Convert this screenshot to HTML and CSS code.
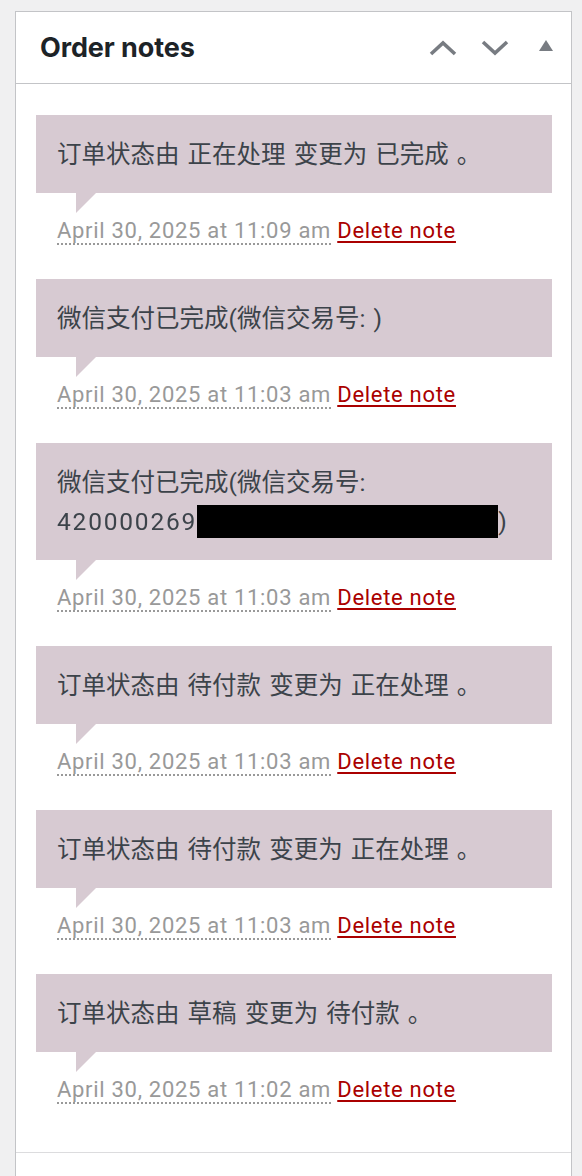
FILE: index.html
```html
<!DOCTYPE html>
<html lang="zh-CN">
<head>
	<meta charset="UTF-8">
	<title>Order notes</title>
	<link rel="stylesheet" href="styles.css">
</head>
<body>
	<div id="woocommerce-order-notes" class="postbox">
		<div class="postbox-header">
			<h2 class="hndle">Order notes</h2>
			<div class="handle-actions">
				<button type="button" class="handle-order-higher" aria-label="Move up">
					<svg width="28" height="16" viewBox="0 0 28 16"><path d="M2 14 L14 3 L26 14" fill="none" stroke="#787c82" stroke-width="3.6"/></svg>
				</button>
				<button type="button" class="handle-order-lower" aria-label="Move down">
					<svg width="28" height="16" viewBox="0 0 28 16"><path d="M2 2 L14 13 L26 2" fill="none" stroke="#787c82" stroke-width="3.6"/></svg>
				</button>
				<button type="button" class="handlediv" aria-label="Toggle panel">
					<svg width="14" height="11" viewBox="0 0 14 11"><path d="M7 0 L14 11 L0 11 Z" fill="#787c82"/></svg>
				</button>
			</div>
		</div>
		<div class="inside">
			<ul class="order_notes">
				<li class="note system-note">
					<div class="note_content"><p>订单状态由 正在处理 变更为 已完成 。</p></div>
					<p class="meta"><abbr class="exact-date" title="2025-04-30 11:09:00">April 30, 2025 at 11:09 am</abbr> <a href="#" class="delete_note">Delete note</a></p>
				</li>
				<li class="note system-note">
					<div class="note_content"><p>微信支付已完成(微信交易号: )</p></div>
					<p class="meta"><abbr class="exact-date" title="2025-04-30 11:03:00">April 30, 2025 at 11:03 am</abbr> <a href="#" class="delete_note">Delete note</a></p>
				</li>
				<li class="note system-note">
					<div class="note_content"><p>微信支付已完成(微信交易号:<br><span class="blurred">420000269</span><span class="redacted"></span>)</p></div>
					<p class="meta"><abbr class="exact-date" title="2025-04-30 11:03:00">April 30, 2025 at 11:03 am</abbr> <a href="#" class="delete_note">Delete note</a></p>
				</li>
				<li class="note system-note">
					<div class="note_content"><p>订单状态由 待付款 变更为 正在处理 。</p></div>
					<p class="meta"><abbr class="exact-date" title="2025-04-30 11:03:00">April 30, 2025 at 11:03 am</abbr> <a href="#" class="delete_note">Delete note</a></p>
				</li>
				<li class="note system-note">
					<div class="note_content"><p>订单状态由 待付款 变更为 正在处理 。</p></div>
					<p class="meta"><abbr class="exact-date" title="2025-04-30 11:03:00">April 30, 2025 at 11:03 am</abbr> <a href="#" class="delete_note">Delete note</a></p>
				</li>
				<li class="note system-note">
					<div class="note_content"><p>订单状态由 草稿 变更为 待付款 。</p></div>
					<p class="meta"><abbr class="exact-date" title="2025-04-30 11:02:00">April 30, 2025 at 11:02 am</abbr> <a href="#" class="delete_note">Delete note</a></p>
				</li>
			</ul>
		</div>
		<div class="add_note"></div>
	</div>
</body>
</html>
```

FILE: styles.css
```css
* {
	margin:0;
	padding:0;
	box-sizing:border-box;
}
html,body {
	height:100%;
	overflow:hidden;
}
body {
	background:#f0f0f1;
	font-family:Roboto, "Noto Sans CJK SC", sans-serif;
	color:#3c434a;
}
ul {
	list-style:none;
}
.postbox {
	margin:11px 0 0 15px;
	width:557px;
	background:#fff;
	border:1px solid #c3c4c7;
	border-bottom:none;
}
.postbox-header {
	display:flex;
	align-items:center;
	justify-content:space-between;
	height:72px;
	padding:0 0 0 24px;
	border-bottom:1px solid #c3c4c7;
}
.hndle {
	font-family:Inter, "Noto Sans CJK SC", sans-serif;
	font-size:27px;
	font-weight:700;
	color:#1d2327;
	letter-spacing:-0.1px;
	margin-top:-1px;
}
.handle-actions {
	display:flex;
	align-items:center;
}
.handle-actions button {
	display:flex;
	align-items:center;
	justify-content:center;
	width:52px;
	height:40px;
	border:none;
	background:none;
	cursor:pointer;
}
.handle-actions .handlediv {
	width:50px;
	margin-bottom:4px;
}
.inside {
	padding:31px 19px 14px 20px;
}
.note {
	margin-bottom:33px;
}
.note_content {
	position:relative;
	background:#d7cad2;
	padding:19.5px 21px;
	font-size:24.5px;
	line-height:39px;
	word-spacing:2px;
	color:#3c434a;
}
.note_content:after {
	content:"";
	position:absolute;
	left:40px;
	bottom:-20px;
	border-style:solid;
	border-width:20px 20px 0 0;
	border-color:#d7cad2 transparent;
}
.blurred {
	letter-spacing:1.8px;
	filter:blur(0.5px);
}
.redacted {
	display:inline-block;
	width:301px;
	height:33px;
	background:#000;
	vertical-align:-8px;
}
.meta {
	padding:23px 21px 0;
	font-size:22px;
	letter-spacing:0.7px;
	line-height:30px;
	color:#999;
}
.exact-date {
	text-decoration:none;
	border-bottom:2px dotted #999;
}
.delete_note {
	color:#a00;
	text-decoration:underline;
	text-decoration-thickness:2px;
	text-underline-offset:3px;
}
.add_note {
	height:60px;
	border-top:1px solid #dcdcde;
}
```
